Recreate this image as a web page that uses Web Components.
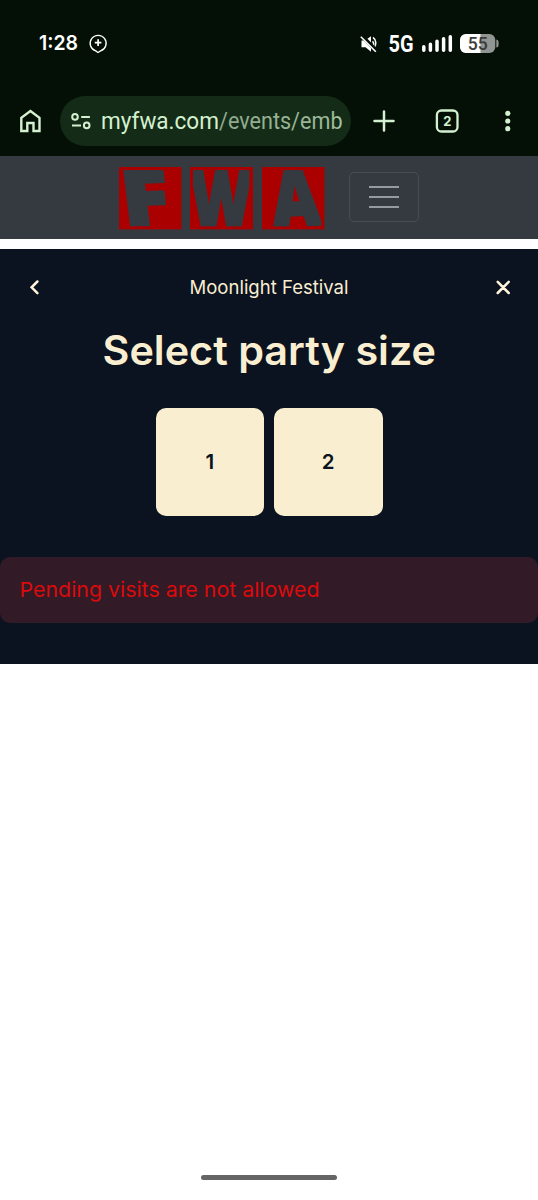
<!DOCTYPE html>
<html lang="en">
<head>
<meta charset="utf-8">
<meta name="viewport" content="width=device-width">
<title>Moonlight Festival</title>
<style>html,body{margin:0;background:#fff;font-family:Inter,"Open Sans",sans-serif}</style>
</head>
<body>
<phone-screen></phone-screen>
<script>
const define = (name, html) => customElements.define(name, class extends HTMLElement {
  constructor() {
    super();
    const t = document.createElement('template');
    t.innerHTML = html;
    this.attachShadow({mode: 'open'}).append(t.content.cloneNode(true));
  }
});

define('status-bar', `<style>
:host{display:block;height:86px;color:#fff}
svg{display:block}
text{font-family:Inter,sans-serif}
</style>
<svg width="538" height="86" fill="#fff">
  <text x="39" y="50.4" font-size="20.3" font-weight="600" textLength="39" lengthAdjust="spacingAndGlyphs">1:28</text>
  <path d="M95.7 50.9A8 8 0 1 1 100.6 50.9L98 52.5Z" fill="none" stroke="#fff" stroke-width="1.3" stroke-linejoin="round"/>
  <path d="M98.1 39.3v6.6M94.8 42.6h6.6" stroke="#fff" stroke-width="1.7"/>
  <path d="M361.5 40.4h3.5l6-4.2v15.5l-5.5-4.5h-4z"/>
  <path d="M372.5 41.2a3.4 3.4 0 0 1 0 4.8M373 37.4a7.3 7.3 0 0 1 1.1 10.5" fill="none" stroke="#fff" stroke-width="1.5"/>
  <path d="M361.5 35.6l15.4 15.5" stroke="#061107" stroke-width="4"/>
  <path d="M360.8 36.8l15 15" stroke="#fff" stroke-width="1.6"/>
  <text x="388.5" y="51.6" font-size="23" font-weight="700" style="font-family:Roboto,sans-serif" textLength="25" lengthAdjust="spacingAndGlyphs">5G</text>
  <g stroke="#fff" stroke-width="3.5" stroke-linecap="round"><path d="M423.8 46.8v3.5M430.4 44.3v6M437 41.2v9.1M443.6 38.7v11.6M450.3 36.7v13.6"/></g>
  <rect x="460" y="34" width="35.3" height="19" rx="6" fill="#929693"/>
  <path d="M466 34h14.5v19H466a6 6 0 0 1-6-6v-7a6 6 0 0 1 6-6z"/>
  <path d="M496.3 39.5q2.3 0 2.3 2.5v3q0 2.5-2.3 2.5z" fill="#929693"/>
  <text x="467.7" y="50.1" font-size="18.5" font-weight="500" fill="#3b3d3b" style="font-family:Roboto,sans-serif" textLength="20" lengthAdjust="spacingAndGlyphs">55</text>
</svg>`);

define('browser-bar', `<style>
:host{display:flex;height:70px;align-items:center;box-sizing:border-box;padding-left:18px}
.url{width:291px;height:50px;border-radius:25px;background:#142b17;margin:0 1px 0 17px}
svg{display:block;flex:none;overflow:visible}
text{font-family:Roboto,sans-serif}
</style>
<svg width="25" height="30" fill="none" stroke="#d3f0cf" stroke-width="2.4"><path d="M3.3 25V11.8L12.4 5l9.1 6.8V25h-6v-8H9.3v8z"/></svg>
<div class="url"><svg width="291" height="50">
  <g fill="none" stroke="#d3f0cf" stroke-width="2"><circle cx="15" cy="20.9" r="2.8"/><path d="M21.2 20.9h8.7M12 29.4h9"/><circle cx="26.7" cy="29.4" r="2.8"/></g>
  <defs><linearGradient id="fade" gradientUnits="userSpaceOnUse" x1="158" x2="284" y1="0" y2="0"><stop offset="0" stop-color="#8fa98d"/><stop offset=".9" stop-color="#9dbb9a"/><stop offset="1" stop-color="#a5c8a2"/></linearGradient></defs>
  <text x="41" y="32.7" font-size="23.2" fill="#d3f0cf" textLength="118" lengthAdjust="spacingAndGlyphs">myfwa.com</text>
  <text x="159" y="32.7" font-size="23.2" fill="url(#fade)" textLength="123.5" lengthAdjust="spacingAndGlyphs">/events/emb</text>
</svg></div>
<svg width="186" height="50" fill="none" stroke="#d3f0cf">
  <path d="M32 15.5v19M22.5 25h19" stroke-width="2.5" stroke-linecap="round"/>
  <rect x="84.9" y="14.5" width="20.6" height="21" rx="4.5" stroke-width="2.3"/>
  <text x="91.2" y="29.9" font-size="13" font-weight="700" fill="#d3f0cf" stroke="none" style="font-family:Inter,sans-serif">2</text>
  <g fill="#d3f0cf" stroke="none"><circle cx="155.8" cy="17.3" r="2.6"/><circle cx="155.8" cy="25" r="2.6"/><circle cx="155.8" cy="32.7" r="2.6"/></g>
</svg>`);

define('logo-tile', `<style>
:host{display:block;width:62.4px;height:62.4px;background:#ab0000}
</style><slot></slot>`);

define('site-header', `<style>
:host{display:flex;height:83px;background:#353a40;box-sizing:border-box;padding:10.8px 0 0 118.8px}
.logo{display:flex;gap:9.2px;width:230px}
svg{display:block;overflow:visible}
text{font-family:"Open Sans",sans-serif;font-weight:800;fill:#353a40;stroke:#353a40}
rect{fill:none;stroke:#ab0000;stroke-width:3}
.menu{width:70.5px;height:50.5px;margin-top:4.8px;box-sizing:border-box;border:1.5px solid #484d53;border-radius:5px;display:flex;flex-direction:column;gap:8px;align-items:center;justify-content:center}
.menu i{width:30.5px;height:2px;background:#969aa1}
</style>
<div class="logo">
<logo-tile><svg width="62.4" height="62.4"><text transform="translate(6 58.5) skewX(5) rotate(-2)" font-size="76" stroke-width="3" textLength="47" lengthAdjust="spacingAndGlyphs">F</text><rect x="1.5" y="1.5" width="59.4" height="59.4"/></svg></logo-tile>
<logo-tile><svg width="62.4" height="62.4"><text x="0.5" y="58.5" font-size="77" stroke-width="3" textLength="61.5" lengthAdjust="spacingAndGlyphs">W</text><rect x="1.5" y="1.5" width="59.4" height="59.4"/></svg></logo-tile>
<logo-tile><svg width="62.4" height="62.4"><text transform="translate(12.5 59) skewX(3) rotate(-2)" font-size="77" stroke-width="3" textLength="47" lengthAdjust="spacingAndGlyphs">A</text><rect x="1.5" y="1.5" width="59.4" height="59.4"/></svg></logo-tile>
</div>
<div class="menu"><i></i><i></i><i></i></div>`);

define('party-option', `<style>
:host{display:grid;place-items:center;width:108.5px;height:108.5px;border-radius:10px;background:#faeed1;color:#0b1220;font:600 20.5px Inter,sans-serif}
</style><slot></slot>`);

define('error-alert', `<style>
:host{display:block;height:66.5px;border-radius:10px;background:#321b26}
svg{display:block}text{font-family:Inter,sans-serif}
</style><svg width="538" height="66"><text x="19.5" y="40.4" font-size="20.5" fill="#dc0a0d" textLength="300" lengthAdjust="spacingAndGlyphs">Pending visits are not allowed</text></svg>`);

define('booking-panel', `<style>
:host{display:block;height:415px;margin-top:10px;background:#0b1220}
svg{display:block}text{font-family:Inter,sans-serif}
.sizes{display:flex;justify-content:center;gap:10px;margin-bottom:40.5px}
</style>
<svg width="538" height="158.5" fill="#faeed1">
  <path d="M37.4 32.5l-5.8 5.8 5.8 5.8M497.7 32.8l11 11.2M508.7 32.8l-11 11.2" fill="none" stroke="#fff5dc" stroke-width="2.5" stroke-linecap="round"/>
  <text x="189.5" y="44.8" font-size="18.5" textLength="159" lengthAdjust="spacingAndGlyphs">Moonlight Festival</text>
  <text x="102.5" y="116.4" font-size="40.5" font-weight="600" textLength="333.5" lengthAdjust="spacingAndGlyphs">Select party size</text>
</svg>
<div class="sizes"><party-option>1</party-option><party-option>2</party-option></div>
<error-alert></error-alert>`);

define('phone-screen', `<style>
:host{display:flex;flex-direction:column;width:538px;height:1200px;background:#fff;overflow:hidden}
.chrome{background:#041006}
.grip{width:136px;height:5px;border-radius:3px;background:#656565;margin:auto auto 20px}
</style>
<div class="chrome"><status-bar></status-bar><browser-bar></browser-bar></div>
<site-header></site-header>
<booking-panel></booking-panel>
<div class="grip"></div>`);
</script>
</body>
</html>
